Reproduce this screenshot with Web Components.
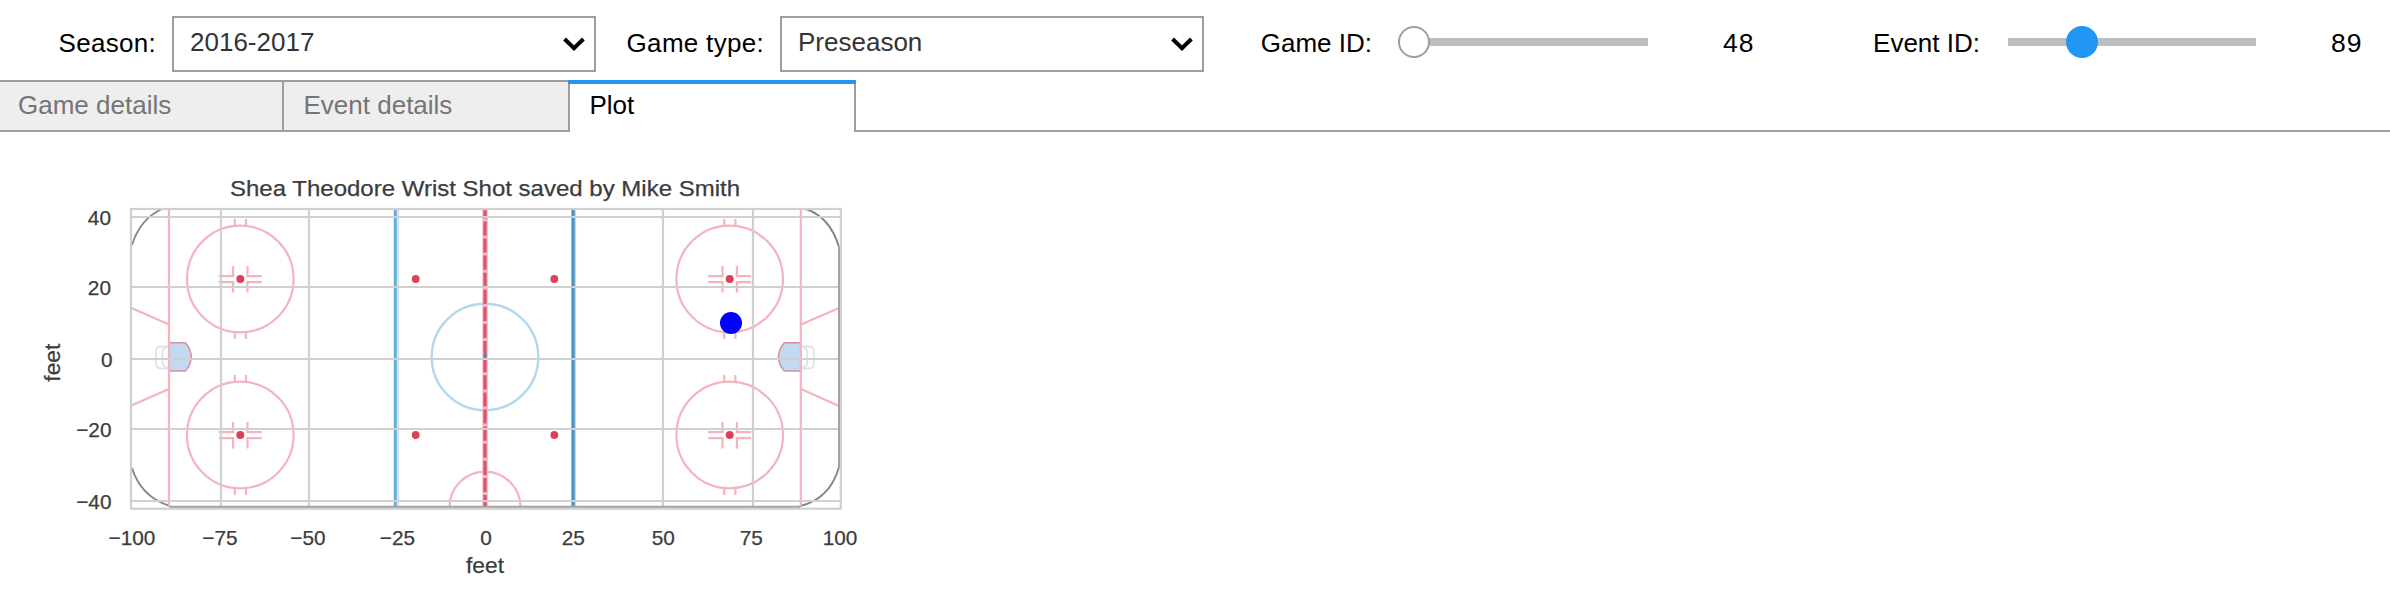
<!DOCTYPE html>
<html lang="en">
<head>
<meta charset="utf-8">
<title>Game explorer</title>
<style>
body{margin:0;background:#fff;font:26px/56px "Liberation Sans",Arial,sans-serif;color:#000}
</style>
</head>
<body>
<game-explorer></game-explorer>
<script>
const define = (name, html) => customElements.define(name, class extends HTMLElement {
  constructor() {
    super();
    this.attachShadow({ mode: 'open' }).innerHTML = html;
  }
});

define('labelled-select', `
<style>
:host{display:flex;height:56px;width:596px;flex:none}
.label{width:156px;flex:none;text-align:right;margin-right:16px;white-space:nowrap;line-height:54px;letter-spacing:.3px}
.box{box-sizing:border-box;width:424px;height:56px;border:2px solid #9e9e9e;padding:0 9px 0 16px;display:flex;align-items:center;justify-content:space-between;color:#333;line-height:50px}
.value{height:54px}
svg{display:block;width:22px;height:14px}
</style>
<span class="label"><slot name="label"></slot></span>
<div class="box"><span class="value"><slot></slot></span>
<svg viewBox="0 0 22 14"><path d="M1.6 2 L11 11.2 L20.4 2" fill="none" stroke="#000" stroke-width="4"/></svg></div>`);

define('labelled-slider', `
<style>
:host{display:flex;height:54px;flex:none;align-items:center;line-height:54px}
.label{width:156px;text-align:right;white-space:nowrap}
.track{position:relative;width:248px;height:8px;background:#bdbdbd;margin:-2px 0 0 28px}
.knob{position:absolute;box-sizing:border-box;width:32px;height:32px;top:-12px;left:var(--at);border-radius:50%;background:var(--fill);border:2px solid var(--ring)}
.value{margin-left:75px;font-size:26.500px;letter-spacing:1px}
</style>
<span class="label"><slot name="label"></slot></span>
<div class="track"><div class="knob"></div></div>
<span class="value"><slot></slot></span>`);

define('tab-item', `
<style>
:host{display:block;box-sizing:border-box;flex:none;width:286px;height:52px;border:2px solid #9e9e9e;border-left:0;background:#eee;color:#757575;line-height:46px;padding-left:19.500px}
:host([first]){width:284px;padding-left:18px}
:host([active]){position:relative;border-bottom:0;border-top:0;background:#fff;color:#000;padding-top:2px}
:host([active])::before{content:"";position:absolute;left:-2px;right:-2px;top:0;height:4px;background:#2196f3}
</style><slot></slot>`);

define('tab-bar', `
<style>
:host{display:flex;height:52px;margin-top:8px}
.rest{flex:1;border-bottom:2px solid #9e9e9e}
</style><slot></slot><div class="rest"></div>`);

define('rink-plot', `
<style>
:host{display:block;width:880px;height:464px;overflow:hidden}
svg{display:block}
text{font-family:"Liberation Sans",Arial,sans-serif;fill:#3c3c3c;stroke:#3c3c3c;stroke-width:.25px}
.tick{font-size:20.8px}
.name{font-size:22.3px}
.pink{stroke:#f5b3be;stroke-width:2.200;fill:none}
.grid{stroke:#d0d0d0;stroke-width:2.2;fill:none}
</style>
<svg width="880" height="464" viewBox="0 132 880 464">
  <defs>
    <g id="face">
      <circle r="53.3" class="pink"/>
      <path class="pink" d="M-5.5-60v7M5.7-60v7M-5.5 53v7M5.7 53v7M-7.2-13v10.2H-21.5M7.2-13v10.2H21.5M-7.2 13.5V3.2H-21.5M7.2 13.5V3.2H21.5"/>
    </g>
    <g id="net">
      <path d="M169 346.5h-8q-5 0-5 5v12q0 5 5 5h8M169 346.5q-6.500 1-6.500 6v9.500q0 5 6.500 6" fill="none" stroke="#dfe2ea" stroke-width="1.8"/>
      <path d="M169 342.700h16.500Q191 349 191.300 357Q191 365 185.500 371H169z" fill="#c2d9ef" stroke="#d78da6" stroke-width="1.5"/>
    </g>
  </defs>
  <g fill="none" stroke="#858585" stroke-width="1.9">
    <path d="M132 245Q140 219 162 209M132 468Q141 497 170 506M800 506Q830 499 839 467M839 247Q830 217 806 209"/>
  </g>
  <use href="#net"/><use href="#net" transform="matrix(-1 0 0 1 969.800 0)"/>
  <path class="pink" d="M169 209V506M800.800 209V506M132 308.300L169 324.500M132 405.300L169 389M839 308L801 324.500M839 406L801 389"/>
  <use href="#face" x="240.300" y="279"/><use href="#face" x="240.300" y="435"/>
  <use href="#face" x="729.700" y="279"/><use href="#face" x="729.700" y="435"/>
  <circle cx="485" cy="357" r="53.300" fill="none" stroke="#b3d7ec" stroke-width="2.400"/>
  <path class="pink" d="M449.500 507A35.500 35.500 0 0 1 520.500 507"/>
  <path class="grid" d="M221 209V508M309 209V508M663 209V508M753 209V508"/>
  <path d="M398 209V507" stroke="#d3e3ee" stroke-width="2.500"/>
  <path d="M395.300 209V507" stroke="#5eaed8" stroke-width="3"/>
  <path d="M575 209V507M487 209V507" stroke="#d0d0d8" stroke-width="2.200"/>
  <path d="M573 209V507" stroke="#3c97cb" stroke-width="3.200"/>
  <path d="M484.700 209V507" stroke="#f2b8c4" stroke-width="4.600"/>
  <path d="M485 209V507" stroke="#e24f69" stroke-width="3.200" stroke-dasharray="14.100 3" stroke-dashoffset="4.700"/>
  <path d="M485 354.500V358.500" stroke="#3c8ec8" stroke-width="3.200"/>
  <path class="grid" d="M131 217H841M131 287H841M131 359H841M131 429H841M131 501H841"/>
  <rect x="131" y="209" width="709.800" height="299.700" fill="none" stroke="#d0d0d0" stroke-width="2.200"/>
  <path d="M170 506.700H800M839 247V467" stroke="#a3a3a3" stroke-width="2"/>
  <g fill="#df3f58"><circle cx="240.300" cy="279" r="4"/><circle cx="240.300" cy="435" r="4"/><circle cx="729.700" cy="279" r="4"/><circle cx="729.700" cy="435" r="4"/><circle cx="415.700" cy="279" r="3.900"/><circle cx="415.700" cy="435" r="3.900"/><circle cx="554.300" cy="279" r="3.900"/><circle cx="554.300" cy="435" r="3.900"/></g>
  <circle cx="731" cy="323" r="11" fill="#00f"/>
  <text class="name" x="230" y="195.500" textLength="510" lengthAdjust="spacingAndGlyphs">Shea Theodore Wrist Shot saved by Mike Smith</text>
  <g class="tick" text-anchor="end">
    <text x="111" y="225">40</text><text x="111" y="295">20</text><text x="112.500" y="367">0</text><text x="111.500" y="437">−20</text><text x="111.500" y="509">−40</text>
  </g>
  <g class="tick" text-anchor="middle">
    <text x="132" y="545">−100</text><text x="220" y="545">−75</text><text x="308" y="545">−50</text><text x="397.500" y="545">−25</text><text x="486" y="545">0</text><text x="573.300" y="545">25</text><text x="663.300" y="545">50</text><text x="751.300" y="545">75</text><text x="840" y="545">100</text>
  </g>
  <text class="name" x="485" y="573" text-anchor="middle" textLength="38" lengthAdjust="spacingAndGlyphs">feet</text>
  <text class="name" transform="translate(59.700 362.700) rotate(-90)" text-anchor="middle" textLength="38" lengthAdjust="spacingAndGlyphs">feet</text>
</svg>`);

define('game-explorer', `
<style>
:host{display:block;width:2390px;height:596px;overflow:hidden}
.controls{display:flex;height:56px;padding-top:16px}
labelled-select + labelled-select{margin-left:12px}
.game{--at:-2px;--fill:#fff;--ring:#9e9e9e;margin-left:12px;width:608px}
.event{--at:58px;--fill:#2196f3;--ring:#2196f3}
</style>
<div class="controls">
  <labelled-select><span slot="label">Season:</span>2016-2017</labelled-select>
  <labelled-select><span slot="label">Game type:</span>Preseason</labelled-select>
  <labelled-slider class="game"><span slot="label">Game ID:</span>48</labelled-slider>
  <labelled-slider class="event"><span slot="label">Event ID:</span>89</labelled-slider>
</div>
<tab-bar>
  <tab-item first>Game details</tab-item>
  <tab-item>Event details</tab-item>
  <tab-item active>Plot</tab-item>
</tab-bar>
<rink-plot></rink-plot>`);
</script>
</body>
</html>
